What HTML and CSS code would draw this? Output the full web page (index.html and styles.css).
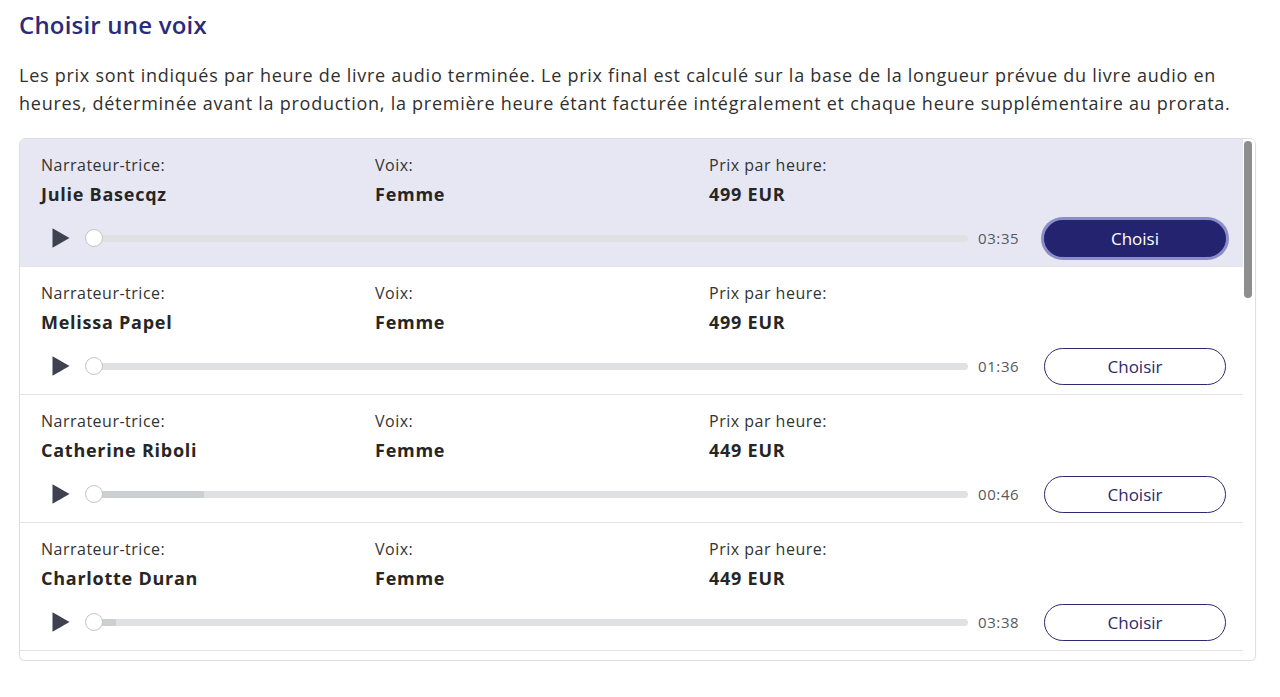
FILE: index.html
```html
<!DOCTYPE html>
<html lang="fr">
<head>
<meta charset="utf-8">
<title>Choisir une voix</title>
<link rel="stylesheet" href="styles.css">
</head>
<body>
<main class="page">
  <h1 class="title">Choisir une voix</h1>
  <p class="intro">Les prix sont indiqués par heure de livre audio terminée. Le prix final est calculé sur la base de la longueur prévue du livre audio en heures, déterminée avant la production, la première heure étant facturée intégralement et chaque heure supplémentaire au prorata.</p>

  <section class="panel">
    <div class="list">
      <div class="row selected">
        <div class="cols">
          <div class="col"><div class="label">Narrateur-trice:</div><div class="value">Julie Basecqz</div></div>
          <div class="col"><div class="label">Voix:</div><div class="value">Femme</div></div>
          <div class="col"><div class="label">Prix par heure:</div><div class="value">499 EUR</div></div>
        </div>
        <div class="player">
          <button class="play" aria-label="Lire"><svg viewBox="0 0 18 22" width="18" height="22"><path d="M0.5 1.2 L17.5 11 L0.5 20.8 Z" fill="#3d4150"/></svg></button>
          <div class="slider"><div class="track"><div class="buffer" style="width:0%"></div></div><div class="thumb"></div></div>
          <span class="time">03:35</span>
          <button class="choose active">Choisi</button>
        </div>
      </div>

      <div class="row">
        <div class="cols">
          <div class="col"><div class="label">Narrateur-trice:</div><div class="value">Melissa Papel</div></div>
          <div class="col"><div class="label">Voix:</div><div class="value">Femme</div></div>
          <div class="col"><div class="label">Prix par heure:</div><div class="value">499 EUR</div></div>
        </div>
        <div class="player">
          <button class="play" aria-label="Lire"><svg viewBox="0 0 18 22" width="18" height="22"><path d="M0.5 1.2 L17.5 11 L0.5 20.8 Z" fill="#3d4150"/></svg></button>
          <div class="slider"><div class="track"><div class="buffer" style="width:0%"></div></div><div class="thumb"></div></div>
          <span class="time">01:36</span>
          <button class="choose">Choisir</button>
        </div>
      </div>

      <div class="row">
        <div class="cols">
          <div class="col"><div class="label">Narrateur-trice:</div><div class="value">Catherine Riboli</div></div>
          <div class="col"><div class="label">Voix:</div><div class="value">Femme</div></div>
          <div class="col"><div class="label">Prix par heure:</div><div class="value">449 EUR</div></div>
        </div>
        <div class="player">
          <button class="play" aria-label="Lire"><svg viewBox="0 0 18 22" width="18" height="22"><path d="M0.5 1.2 L17.5 11 L0.5 20.8 Z" fill="#3d4150"/></svg></button>
          <div class="slider"><div class="track"><div class="buffer" style="width:12.6%"></div></div><div class="thumb"></div></div>
          <span class="time">00:46</span>
          <button class="choose">Choisir</button>
        </div>
      </div>

      <div class="row">
        <div class="cols">
          <div class="col"><div class="label">Narrateur-trice:</div><div class="value">Charlotte Duran</div></div>
          <div class="col"><div class="label">Voix:</div><div class="value">Femme</div></div>
          <div class="col"><div class="label">Prix par heure:</div><div class="value">449 EUR</div></div>
        </div>
        <div class="player">
          <button class="play" aria-label="Lire"><svg viewBox="0 0 18 22" width="18" height="22"><path d="M0.5 1.2 L17.5 11 L0.5 20.8 Z" fill="#3d4150"/></svg></button>
          <div class="slider"><div class="track"><div class="buffer" style="width:2.5%"></div></div><div class="thumb"></div></div>
          <span class="time">03:38</span>
          <button class="choose">Choisir</button>
        </div>
      </div>

      <div class="row"></div>
    </div>
    <div class="scrollbar"><div class="scroll-thumb"></div></div>
  </section>
</main>
</body>
</html>
```

FILE: styles.css
```css
* { box-sizing: border-box; }

html, body {
  margin: 0;
  padding: 0;
  background: #ffffff;
}

body {
  font-family: "Open Sans", "Noto Sans", "Liberation Sans", sans-serif;
  color: #333333;
}

.page {
  padding: 9px 24px 0 19px;
}

.title {
  margin: 0;
  font-size: 24px;
  line-height: 32px;
  font-weight: 600;
  letter-spacing: 0.2px;
  color: #2c2a7a;
}

.intro {
  margin: 20px 0 0 0;
  font-size: 18px;
  line-height: 28px;
  letter-spacing: 0.74px;
  color: #2f2f2f;
}

.panel {
  margin-top: 21px;
  height: 523px;
  display: flex;
  border: 1px solid #dedede;
  border-radius: 6px;
  box-shadow: 0 2px 2px rgba(0, 0, 0, 0.06);
  overflow: hidden;
  background: #ffffff;
}

.list {
  flex: 1;
  overflow: hidden;
}

.row {
  height: 128px;
  padding: 15px 17px 0 21px;
  border-bottom: 1px solid #e4e4e4;
  background: #ffffff;
}

.row.selected {
  background: #e6e7f3;
}

.cols {
  display: flex;
}

.col {
  width: 334px;
}

.label {
  font-size: 16px;
  line-height: 22px;
  letter-spacing: 0.5px;
  color: #333333;
}

.value {
  margin-top: 5px;
  font-size: 18px;
  line-height: 26px;
  font-weight: 700;
  letter-spacing: 0.75px;
  color: #262626;
}

.player {
  margin-top: 12px;
  height: 38px;
  display: flex;
  align-items: center;
}

.play {
  width: 39px;
  height: 38px;
  padding: 0;
  border: 0;
  background: transparent;
  display: flex;
  align-items: center;
  justify-content: center;
  cursor: pointer;
}

.play svg { display: block; }

.slider {
  flex: 1;
  margin-left: 5px;
  position: relative;
  height: 20px;
  display: flex;
  align-items: center;
}

.track {
  margin-left: 9px;
  flex: 1;
  height: 7px;
  border-radius: 4px;
  background: #e0e1e3;
  overflow: hidden;
}

.buffer {
  height: 100%;
  background: #cdd0d3;
}

.thumb {
  position: absolute;
  left: 0;
  top: 1px;
  width: 18px;
  height: 18px;
  border-radius: 50%;
  background: #ffffff;
  border: 1px solid #c4c4c4;
}

.time {
  margin-left: 10px;
  font-size: 15px;
  letter-spacing: 0.6px;
  color: #555a60;
  width: 42px;
}

.choose {
  margin-left: 24px;
  width: 182px;
  height: 37px;
  border-radius: 19px;
  border: 1px solid #2c2a6e;
  background: #ffffff;
  color: #2c2a6e;
  font-family: "Open Sans", "Noto Sans", sans-serif;
  font-size: 17px;
  cursor: pointer;
}

.choose.active {
  background: #24236f;
  color: #ffffff;
  border-color: #24236f;
  box-shadow: 0 0 0 3px #8b8dc9;
}

.scrollbar {
  width: 12px;
  padding: 2px 2px 0 1px;
  background: #ffffff;
}

.scroll-thumb {
  width: 8px;
  height: 157px;
  border-radius: 4px;
  background: #8e8e8e;
}
```
